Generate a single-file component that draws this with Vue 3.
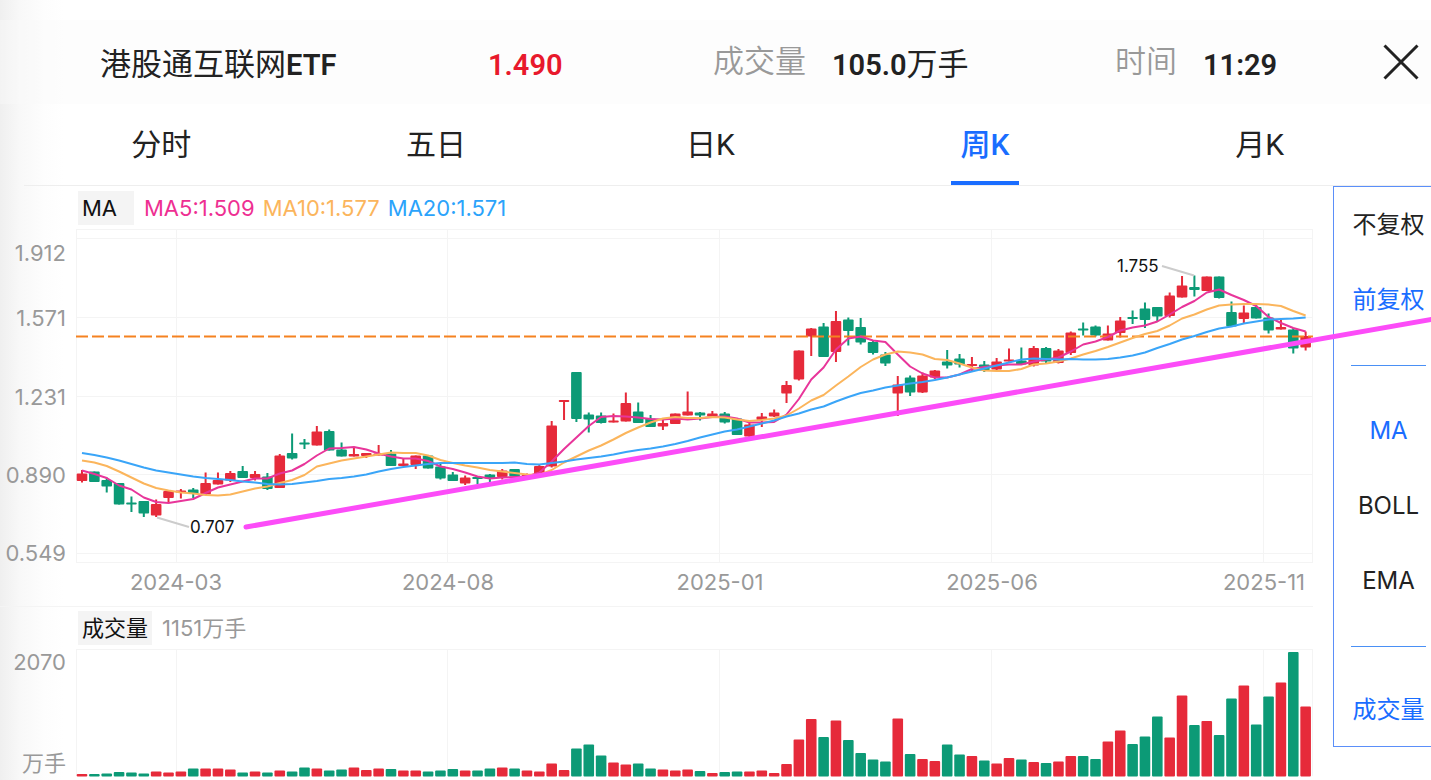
<template>
  <div class="quote-page">
    <header class="quote-header">
      <h1 class="name">港股通互联网<b>ETF</b></h1>
      <div class="price">1.490</div>
      <div class="info"><span class="label">成交量</span><span class="value"><b>105.0</b>万手</span></div>
      <div class="info"><span class="label">时间</span><span class="value"><b>11:29</b></span></div>
      <button class="close" type="button" aria-label="关闭">
        <svg viewBox="0 0 36 36" width="36" height="36">
          <path d="M1.5 1.5 L34.5 34.5 M34.5 1.5 L1.5 34.5" />
        </svg>
      </button>
    </header>

    <nav class="tabs">
      <button
        v-for="tab in tabs"
        :key="tab"
        type="button"
        :class="['tab', { active: tab === activeTab }]"
        @click="activeTab = tab"
      >
        <span>{{ tab }}</span>
      </button>
    </nav>

    <main class="content">
      <section class="charts">
        <div class="legend">
          <span class="tag tag-ma">MA</span>
          <span class="ma5">MA5:1.509</span>
          <span class="ma10">MA10:1.577</span>
          <span class="ma20">MA20:1.571</span>
        </div>

        <!-- K线图 -->
        <svg class="chart price-chart" viewBox="0 229 1313 377">
          <g class="grid">
            <path v-for="y in gridRows" :key="'r' + y" :d="`M76 ${y} H1313`" />
            <path v-for="x in gridCols" :key="'c' + x" :d="`M${x} 229 V563`" />
          </g>
          <g class="axis">
            <text v-for="t in priceTicks" :key="t.label" x="66" :y="t.y" text-anchor="end">{{ t.label }}</text>
            <text v-for="t in dateTicks" :key="t.label" :x="t.x" y="590" text-anchor="middle">{{ t.label }}</text>
          </g>
          <g v-for="(c, i) in candles" :key="i" :class="c[4] ? 'up' : 'down'">
            <rect :x="xAt(i) - 1" :y="c[2]" width="2" :height="c[3] - c[2]" />
            <rect :x="xAt(i) - 5.3" :y="c[0]" width="10.6" :height="c[1] - c[0]" rx="1" />
          </g>
          <path class="last-price" d="M76 336.5 H1313" />
          <polyline class="line5" :points="toPoints(ma5)" />
          <polyline class="line10" :points="toPoints(ma10)" />
          <polyline class="line20" :points="toPoints(ma20)" />
          <path class="pointer" d="M157 517.5 L189 527 M1162 266 L1194 275.5" />
          <text class="mark" x="190" y="533">0.707</text>
          <text class="mark" x="1117" y="272">1.755</text>
          <path class="trend" d="M246 527 L1440 318" />
        </svg>

        <div class="legend volume-legend">
          <span class="tag">成交量</span>
          <span class="volume-text">1151万手</span>
        </div>

        <!-- 成交量 -->
        <svg class="chart" viewBox="0 649 1313 131">
          <g class="grid">
            <path d="M76 649.5 H1313" />
            <path v-for="x in gridCols" :key="x" :d="`M${x} 649 V776`" />
          </g>
          <g class="axis">
            <text x="66" y="670" text-anchor="end">2070</text>
            <text x="66" y="771" text-anchor="end">万手</text>
          </g>
          <rect
            v-for="(v, i) in volumes"
            :key="i"
            :class="candles[i][4] ? 'up' : 'down'"
            :x="xAt(i) - 5.3"
            :y="776.5 - v"
            width="10.6"
            :height="v"
            rx="1"
          />
        </svg>
      </section>

      <aside class="side">
        <button
          v-for="item in adjusts"
          :key="item"
          type="button"
          :class="{ active: item === adjust }"
          @click="adjust = item"
        >{{ item }}</button>
        <hr />
        <button
          v-for="item in indicators"
          :key="item"
          type="button"
          :class="{ active: item === indicator }"
          @click="indicator = item"
        >{{ item }}</button>
        <hr />
        <button type="button" class="active">成交量</button>
      </aside>
    </main>
  </div>
</template>

<script setup>
import { ref } from 'vue';

const tabs = ['分时', '五日', '日K', '周K', '月K'];
const activeTab = ref('周K');

const adjusts = ['不复权', '前复权'];
const adjust = ref('前复权');

const indicators = ['MA', 'BOLL', 'EMA'];
const indicator = ref('MA');

const gridRows = [229.5, 238.5, 317.5, 396.5, 474.5, 553.5, 562.5];
const gridCols = [76.5, 176.5, 447.5, 719.5, 991.5, 1263.5, 1312.5];

const priceTicks = [
  { label: '1.912', y: 261 },
  { label: '1.571', y: 326 },
  { label: '1.231', y: 405 },
  { label: '0.890', y: 483 },
  { label: '0.549', y: 561 }
];

const dateTicks = [
  { label: '2024-03', x: 176 },
  { label: '2024-08', x: 448 },
  { label: '2025-01', x: 720 },
  { label: '2025-06', x: 992 },
  { label: '2025-11', x: 1264 }
];

// 实体上沿, 实体下沿, 最高, 最低, 是否上涨
const candles = [
  [473.5, 481, 470, 482.5, 1], [471.5, 482, 471.5, 482, 0], [480, 486.5, 477.5, 492.5, 0], [483, 504.5, 483, 504.5, 0],
  [502.5, 504.5, 496.5, 512, 0], [501, 513.5, 501, 517, 0], [504, 515.5, 499.5, 517, 1], [491, 498, 490, 503, 1],
  [490.5, 492.5, 489, 498.5, 1], [489.5, 494, 488, 498, 0], [483, 494.5, 472.5, 495, 1], [480, 484.5, 472.5, 484.5, 1],
  [473, 480.5, 471, 482, 1], [471, 478, 466, 478, 0], [474, 478, 471, 480.5, 1], [476.5, 489, 473, 490, 0],
  [455.5, 488, 454, 488, 1], [453, 458.5, 433.5, 459.5, 0], [442.5, 444.5, 439, 449, 0], [431.5, 445.5, 426, 445.5, 1],
  [431, 450.5, 429.5, 450.5, 0], [449.5, 456.5, 442.5, 456.5, 0], [454, 456.5, 447, 456.5, 1], [453, 456, 453, 458, 1],
  [453.5, 455.5, 445, 455.5, 1], [453.5, 466, 450, 466, 0], [463.5, 466, 458, 466, 1], [455.5, 465, 455.5, 469, 1],
  [455.5, 468.5, 455.5, 468.5, 0], [466.5, 478.5, 463.5, 479.5, 0], [474.5, 481, 472, 481, 0], [477.5, 483.5, 475.5, 485, 1],
  [477, 479, 476, 484, 0], [474.5, 478.5, 474, 482.5, 0], [470.5, 477, 469, 479.5, 1], [469, 476.5, 469, 476.5, 0],
  [475, 478, 473.5, 480, 1], [466, 474, 464.5, 474.5, 1], [425.5, 466.5, 421, 467.5, 1], [400, 402, 400, 420, 1],
  [372, 419, 372, 422, 0], [414.5, 419.5, 412.5, 432.5, 0], [415.5, 423, 412.5, 423.5, 0], [420.5, 422.5, 413.5, 422.5, 1],
  [403, 421.5, 392.5, 421.5, 1], [411.5, 423, 402.5, 423, 0], [418.5, 427, 415, 427, 0], [423, 426.5, 420, 430, 1],
  [413.5, 424, 413.5, 424, 1], [411.5, 415.5, 391.5, 415.5, 1], [412.5, 415.5, 412, 420.5, 0], [413.5, 416.5, 411, 417, 1],
  [413.5, 422.5, 412, 423.5, 0], [418.5, 435, 418.5, 435, 0], [424.5, 436.5, 421.5, 437.5, 1], [416.5, 420, 413, 427, 1],
  [412.5, 416.5, 409.5, 417, 1], [385, 393.5, 381, 403, 1], [350.5, 379.5, 350.5, 380.5, 1], [328.5, 336.5, 328, 356, 1],
  [326.5, 357, 323, 357, 0], [321, 352, 311, 362, 1], [319.5, 331, 317.5, 345.5, 0], [327, 342.5, 318, 344.5, 0],
  [342, 353, 340, 354.5, 0], [354.5, 363.5, 352, 366, 0], [384.5, 393.5, 376, 416, 1], [377.5, 392.5, 375.5, 396, 0],
  [375.5, 392.5, 372.5, 393, 1], [370.5, 377.5, 370, 379, 1], [361.5, 365.5, 350, 368.5, 0], [358.5, 364.5, 354, 367.5, 0],
  [364, 366, 357, 371.5, 1], [364.5, 370.5, 361, 372, 0], [361.5, 369.5, 358, 370.5, 1], [359.5, 361.5, 348.5, 361.5, 1],
  [360.5, 364.5, 347.5, 364.5, 0], [348, 365.5, 346, 366.5, 1], [348, 361.5, 347, 364, 0], [350.5, 363, 349, 363.5, 1],
  [332.5, 353, 331.5, 355, 1], [328.5, 330.5, 322.5, 335.5, 0], [326.5, 335.5, 325.5, 336.5, 0], [333.5, 340.5, 325.5, 340.5, 1],
  [320.5, 333, 317, 337.5, 1], [317, 319, 310.5, 324, 0], [308.5, 320, 302.5, 328, 0], [307, 316.5, 307, 321.5, 0],
  [295.5, 316, 292.5, 317.5, 1], [285.5, 297.5, 276, 297.5, 1], [287, 290, 275.5, 296.5, 0], [276.5, 291, 276.5, 291, 1],
  [276.5, 298, 276.5, 298.5, 0], [312, 326.5, 301.5, 326.5, 0], [312.5, 319, 305.5, 323, 1], [307, 318.5, 304.5, 318.5, 0],
  [317.5, 330.5, 313.5, 333.5, 0], [327, 329.5, 318, 329.5, 1], [329.5, 348.5, 328, 353.5, 0], [336, 347.5, 331.5, 350.5, 1]
];

const ma5 = [
  470.5, 474, 478, 485.5, 489.5, 497.5, 502, 503, 501, 499, 493, 487.5, 484.5, 481.5, 478.5, 478.5, 473.5, 470.5, 464, 455.5,
  448.5, 448, 447, 449.5, 453.5, 456.5, 458.5, 458.5, 461, 466.5, 469, 472.5, 476.5, 478.5, 477.5, 477, 476.5, 472.5, 461.5, 449,
  437.5, 426, 417, 416, 416.5, 417.5, 419, 419.5, 418.5, 419.5, 418.5, 417, 416.5, 418.5, 422.5, 422.5, 422, 414.5, 399, 379.5,
  367.5, 349.5, 338.5, 336.5, 340.5, 342, 354.5, 366.5, 373.5, 377.5, 377.5, 374.5, 369, 367, 365.5, 364.5, 364.5, 361.5, 359.5, 357.5,
  351.5, 344.5, 341.5, 337, 330.5, 327.5, 325.5, 321.5, 314.5, 307, 301, 292.5, 289.5, 295, 300, 306, 317, 323, 328, 331.5
];

const ma10 = [
  460.5, 462.5, 466, 471.5, 477.5, 483.5, 488, 490.5, 492.5, 493.5, 495, 495.5, 494.5, 491.5, 488.5, 486.5, 483, 480, 475, 466.5,
  463.5, 460.5, 458.5, 456.5, 454.5, 452.5, 453, 453, 455.5, 460, 463, 465.5, 467.5, 470, 471.5, 473, 474.5, 475, 470, 462.5,
  456.5, 450.5, 445.5, 439.5, 433, 427.5, 422.5, 418.5, 417, 418, 418, 417, 417.5, 419.5, 421, 420, 418.5, 415.5, 408.5, 400.5,
  395, 385.5, 376.5, 367, 359.5, 354.5, 351.5, 352.5, 354.5, 359, 360, 363.5, 367.5, 370.5, 371, 371, 369, 364.5, 363.5, 361.5,
  358.5, 354.5, 351, 347, 342.5, 338, 334, 331, 325.5, 318.5, 314.5, 309.5, 305.5, 304.5, 304, 304, 304.5, 306, 311, 315.5
];

const ma20 = [
  453, 455, 457.5, 460.5, 464, 467.5, 470.5, 472.5, 474.5, 476.5, 478, 479, 480, 481.5, 482.5, 484, 484.5, 484, 482.5, 481,
  479, 478, 476.5, 474.5, 471.5, 469, 467, 465.5, 464, 463, 463, 463, 463, 463, 463, 462.5, 464, 464.5, 463, 461.5,
  459.5, 458, 456.5, 454.5, 452, 450, 448.5, 446.5, 444, 441, 437.5, 434.5, 431.5, 429.5, 426.5, 423.5, 420.5, 416.5, 413.5, 409.5,
  406.5, 401.5, 397, 393, 390.5, 387.5, 385.5, 383.5, 382, 380, 377.5, 374.5, 371.5, 368.5, 365.5, 362.5, 359.5, 358.5, 359, 359.5,
  359, 359.5, 359.5, 359, 357.5, 355.5, 352.5, 348, 344, 339.5, 336, 332, 328.5, 326.5, 323.5, 321.5, 319.5, 319, 318.5, 317.5
];

const volumes = [
  2.5, 2.5, 3, 4.5, 4, 3, 5, 4, 5, 8, 8, 8, 7, 4, 5, 4, 6, 5, 9, 8,
  6, 7, 9, 6.5, 8, 7.5, 6, 6, 5, 6, 7.5, 6, 6, 8, 9, 8, 6, 5, 13, 6.5,
  28, 32, 21, 14, 12, 13, 8, 7, 6, 7, 5.5, 3.5, 4.5, 5, 5, 6, 3.5, 12.5, 37, 57.5,
  39.5, 56, 36.5, 23.5, 17, 15, 58, 22.5, 17.5, 15.5, 32, 22, 20.5, 16, 13, 18.5, 17, 14.5, 13.5, 15,
  20.5, 20.5, 17.5, 35, 46, 32.5, 40, 60, 39, 81, 51.5, 55.5, 41.5, 78, 91, 52, 80, 94, 124.5, 70
];

const xAt = (i) => 82 + i * 12.36;
const toPoints = (values) => values.map((y, i) => `${xAt(i)},${y}`).join(' ');
</script>

<style>
body {
  margin: 0;
  background: #fff;
}
</style>

<style scoped>
.quote-page {
  overflow: hidden;
  padding-top: 20px;
  color: #222;
  font-family: Inter, "Noto Sans CJK SC", sans-serif;
  background: linear-gradient(to right, #efefef 0, #f8f8f8 20px, #fdfdfd 44px, #fff 64px);
}

button {
  border: 0;
  padding: 0;
  background: none;
  color: inherit;
  font: inherit;
  cursor: pointer;
}

.quote-header {
  display: grid;
  grid-template-columns: 388fr 225fr 402fr 268fr 36px;
  align-items: center;
  height: 84px;
  padding: 0 12px 0 100px;
  font-family: Roboto, "Noto Sans CJK SC", sans-serif;
  font-size: 31px;
  line-height: 44px;
  white-space: nowrap;
  background: rgba(250, 250, 250, 0.4);
}

.name {
  margin: 0;
  font-size: 31px;
  font-weight: 400;
}

.name,
.price,
.value {
  padding-top: 5px;
}

.quote-header b,
.price {
  font-size: 29px;
  font-weight: 600;
}

.price {
  color: #e8192c;
}

.info {
  display: flex;
  align-items: center;
  gap: 26px;
}

.label {
  color: #999;
  font-weight: 350;
}

.close svg {
  display: block;
  fill: none;
  stroke: #222;
  stroke-width: 3;
}

.tabs {
  display: flex;
  height: 81px;
  margin-left: 24px;
  padding-right: 34px;
  border-bottom: 1px solid #eee;
}

.tab {
  flex: 1;
  display: flex;
  justify-content: center;
  font-family: Roboto, "Noto Sans CJK SC", sans-serif;
  font-size: 30px;
}

.tab span {
  box-sizing: border-box;
  min-width: 68px;
  height: 100%;
  border-bottom: 4px solid transparent;
  line-height: 82px;
}

.tab.active span {
  border-color: #1a6dff;
  color: #1a6dff;
  font-weight: 500;
}

.content {
  display: flex;
  align-items: flex-start;
}

.charts {
  flex: 1;
  min-width: 0;
  margin-right: 20px;
}

.legend {
  display: flex;
  align-items: center;
  gap: 8px;
  height: 43px;
  padding-left: 78px;
  font-size: 22px;
  line-height: 34px;
  white-space: nowrap;
}

.tag {
  padding: 0 4px;
  background: #f4f4f4;
  color: #111;
}

.tag-ma {
  min-width: 48px;
  margin-right: 2px;
}

.ma5 {
  color: #ee2f92;
}

.ma10 {
  color: #fbb55c;
}

.ma20 {
  color: #2ba3fb;
}

.volume-legend {
  box-sizing: border-box;
  border-top: 1px solid #f4f4f4;
}

.volume-text {
  margin-left: 2px;
  color: #999;
}

.chart {
  display: block;
  width: 100%;
  height: auto;
}

.price-chart {
  position: relative;
  z-index: 1;
  overflow: visible;
  pointer-events: none;
}

.chart path,
.chart polyline {
  fill: none;
}

.grid {
  stroke: #f4f4f4;
}

.axis {
  fill: #999;
  font-size: 22px;
}

.up {
  fill: #e62a3a;
}

.down {
  fill: #0c9a76;
}

.chart .last-price {
  stroke: #f58220;
  stroke-width: 2;
  stroke-dasharray: 12 4;
}

.chart polyline {
  stroke-width: 2;
  stroke-linejoin: round;
}

.line5 {
  stroke: #e8359a;
}

.line10 {
  stroke: #fbb55c;
}

.line20 {
  stroke: #3aa5f8;
}

.pointer {
  stroke: #ccc;
  stroke-width: 2;
}

.mark {
  fill: #111;
  font-size: 17px;
}

.trend {
  stroke: #fc4cf8;
  stroke-width: 5;
  stroke-linecap: round;
}

.side {
  box-sizing: border-box;
  display: flex;
  flex-direction: column;
  width: 98px;
  padding: 0 5px 0 17px;
  border: 1px solid #5b8ff9;
  border-right: 0;
  font-size: 24px;
}

.side button {
  height: 75px;
  line-height: 75px;
  white-space: nowrap;
}

.side button:last-child {
  height: 72px;
  line-height: 72px;
}

.side button.active {
  color: #1a6dff;
}

.side hr {
  width: 100%;
  margin: 28px 0 27px;
  border: 0;
  border-top: 1px solid #4a90f5;
}
</style>
